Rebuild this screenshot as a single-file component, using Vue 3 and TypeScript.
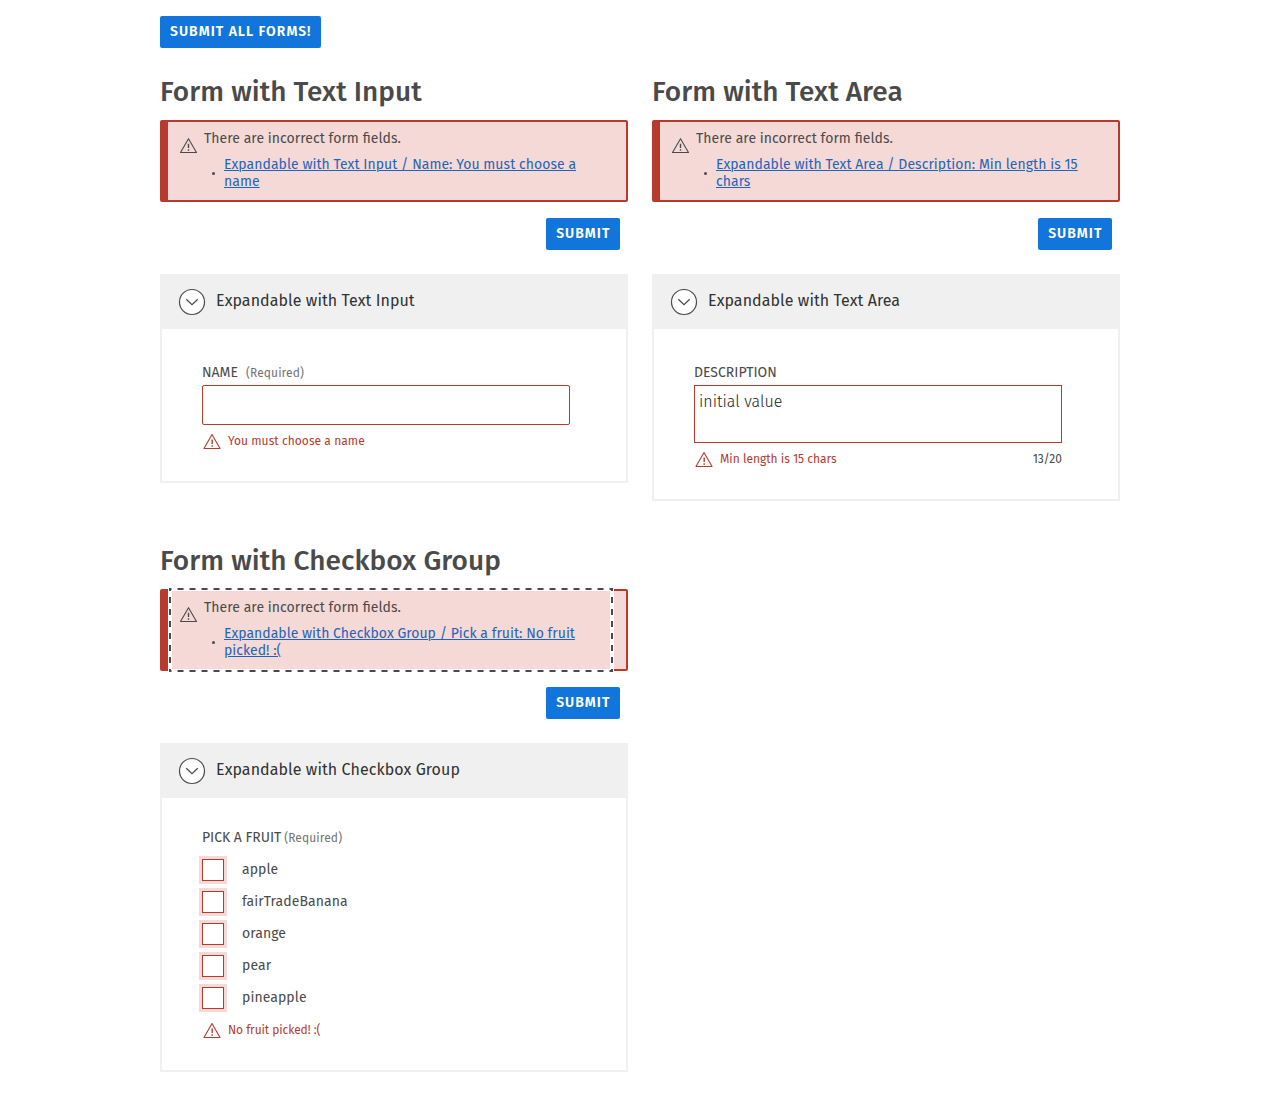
<script setup lang="ts">
import { ref } from 'vue'

interface FormItem {
  title: string
  panel: string
  error: string
  kind: 'input' | 'textarea' | 'checkbox'
  label: string
  required: boolean
  message: string
  focused: boolean
}

const forms: FormItem[] = [
  {
    title: 'Form with Text Input',
    panel: 'Expandable with Text Input',
    error: 'Expandable with Text Input / Name: You must choose a name',
    kind: 'input',
    label: 'Name',
    required: true,
    message: 'You must choose a name',
    focused: false,
  },
  {
    title: 'Form with Text Area',
    panel: 'Expandable with Text Area',
    error: 'Expandable with Text Area / Description: Min length is 15 chars',
    kind: 'textarea',
    label: 'Description',
    required: false,
    message: 'Min length is 15 chars',
    focused: false,
  },
  {
    title: 'Form with Checkbox Group',
    panel: 'Expandable with Checkbox Group',
    error: 'Expandable with Checkbox Group / Pick a fruit: No fruit picked! :(',
    kind: 'checkbox',
    label: 'Pick a fruit',
    required: true,
    message: 'No fruit picked! :(',
    focused: true,
  },
]

const fruits = ['apple', 'fairTradeBanana', 'orange', 'pear', 'pineapple']
const name = ref('')
const description = ref('initial value')
const picked = ref<string[]>([])
</script>

<template>
  <main class="page">
    <button type="button" class="btn">Submit all forms!</button>

    <div class="grid">
      <form v-for="form in forms" :key="form.title" class="form" :class="form.kind" @submit.prevent>
        <h2 class="title">{{ form.title }}</h2>

        <div class="alert">
          <div class="alert-content" :class="{ focused: form.focused }">
            <svg v-if="form.focused" class="focus-ring" viewBox="0 0 444 84" aria-hidden="true">
              <path d="M0 1H444M0 83H444" stroke-dashoffset="3.5" />
              <path d="M1 0V84M443 0V84" stroke-dashoffset="3" />
            </svg>
            <svg class="warn" viewBox="0 0 20 20" aria-hidden="true">
              <path d="M10.5 2.7 18.5 16.5H2.5Z" />
              <path class="mark" d="M10.5 7.7v4.2M10.5 13.3v1.5" />
            </svg>
            <div class="alert-text">
              <p>There are incorrect form fields.</p>
              <ul>
                <li><a href="#">{{ form.error }}</a></li>
              </ul>
            </div>
          </div>
        </div>

        <div class="actions"><button type="submit" class="btn">Submit</button></div>

        <section class="panel">
          <header class="panel-head">
            <svg class="chevron" viewBox="0 0 28 28" aria-hidden="true">
              <circle cx="14" cy="14" r="12.5" />
              <path d="m8.3 11.3 5.7 5.4 5.7-5.4" />
            </svg>
            <span>{{ form.panel }}</span>
          </header>

          <div class="panel-body">
            <div class="label">
              <span class="label-text">{{ form.label }}</span>
              <span v-if="form.required" class="required">(Required)</span>
            </div>

            <input v-if="form.kind === 'input'" v-model="name" class="text-input" />
            <textarea v-else-if="form.kind === 'textarea'" v-model="description" class="text-area"></textarea>
            <div v-else class="options">
              <label v-for="fruit in fruits" :key="fruit" class="option">
                <input v-model="picked" type="checkbox" :value="fruit" />
                <span>{{ fruit }}</span>
              </label>
            </div>

            <div class="message">
              <svg class="warn" viewBox="0 0 20 20" aria-hidden="true">
                <path d="M10 2.5 18 16.5H2Z" />
                <path class="mark" d="M10.2 7.5v4.4M10.2 13.2v1.5" />
              </svg>
              <span>{{ form.message }}</span>
              <span v-if="form.kind === 'textarea'" class="count">{{ description.length }}/20</span>
            </div>
          </div>
        </section>
      </form>
    </div>
  </main>
</template>

<style>
body {
  margin: 0;
  background: #fff;
}
</style>

<style scoped>
.page,
.page * {
  box-sizing: border-box;
}
.page {
  width: 960px;
  margin: 0 auto;
  padding-top: 16px;
  color: #4a4a4a;
  font: 400 14px/17px "Fira Sans", "Noto Sans", sans-serif;
  font-feature-settings: "liga" 1;
}
.btn {
  display: block;
  height: 32px;
  padding: 0 9.6px 2px 10px;
  border: 0;
  border-radius: 2px;
  background: #1175dc;
  color: #fff;
  font: 600 14px/17px "Fira Sans", "Noto Sans", sans-serif;
  letter-spacing: 1px;
  text-transform: uppercase;
}
.grid {
  display: grid;
  grid-template-columns: 468px 468px;
  column-gap: 24px;
  row-gap: 40px;
  align-items: start;
  margin-top: 24px;
}
.title {
  height: 48px;
  margin: 0;
  font-size: 28px;
  font-weight: 500;
  line-height: 40px;
  letter-spacing: 0.05px;
}
.alert {
  height: 82px;
  border: 2px solid #b83a2c;
  border-left-width: 8px;
  border-radius: 2px;
  background: #f5d9d6;
}
.alert-content {
  display: flex;
  width: 442px;
  height: 78px;
  margin-left: 2px;
  padding: 8px 0 0 8px;
}
.focused {
  position: relative;
  width: 438px;
  margin-left: 4px;
  padding-left: 6px;
  box-shadow: 0 0 0 4px #fff;
}
.focus-ring {
  position: absolute;
  top: -3px;
  left: -3px;
  width: 444px;
  height: 84px;
  fill: none;
  stroke: #4a4a4a;
  stroke-width: 2;
  stroke-dasharray: 6 6;
}
.warn {
  flex: none;
  width: 20px;
  height: 20px;
  fill: none;
  stroke: currentColor;
  stroke-width: 1.1;
  stroke-linejoin: round;
}
.warn .mark {
  stroke-width: 1.4;
}
.alert .warn {
  margin: 6px 6px 0 0;
}
.alert p {
  margin: 0;
  letter-spacing: 0.05px;
}
.alert ul {
  margin: 9px 0 0;
  padding: 0;
  list-style: none;
}
.alert li {
  position: relative;
  width: 388px;
  padding-left: 20px;
  letter-spacing: 0.04px;
}
.checkbox .alert li {
  letter-spacing: 0.01px;
}
.alert li::before {
  content: "";
  position: absolute;
  top: 16px;
  left: 8px;
  width: 3px;
  height: 3px;
  border-radius: 50%;
  background: #4a4a4a;
}
.alert a {
  color: #1f64b8;
  text-decoration: underline;
  text-underline-offset: 1px;
  text-decoration-thickness: 1px;
}
.actions {
  display: flex;
  justify-content: flex-end;
  padding: 16px 8px 24px;
}
.panel {
  border: 2px solid #f0f0f0;
}
.panel-head {
  display: flex;
  align-items: center;
  gap: 10px;
  height: 53px;
  padding: 0 0 2px 16px;
  background: #f0f0f0;
  color: #323232;
  font-size: 16px;
  letter-spacing: 0.07px;
}
.panel-head span {
  padding-bottom: 3px;
}
.chevron {
  width: 28px;
  height: 28px;
  fill: none;
  stroke: #4a4a4a;
  stroke-width: 1.2;
}
.chevron circle {
  fill: #fff;
}
.panel-body {
  padding: 35px 56px 29px 40px;
}
.label {
  display: flex;
  align-items: baseline;
  gap: 8px;
  height: 21px;
}
.label-text {
  text-transform: uppercase;
}
.required {
  color: #737373;
  font-size: 12px;
  letter-spacing: 0.1px;
}
.text-input,
.text-area {
  display: block;
  width: 368px;
  border: 1px solid #b83a2c;
  outline: 0;
  background: #fff;
  color: #222;
  font: 300 16px/20px "Fira Sans", "Noto Sans", sans-serif;
}
.text-input {
  height: 40px;
  padding: 0 4px;
  border-radius: 2px;
}
.text-area {
  height: 58px;
  padding: 6px 4px;
  border-radius: 0;
  resize: none;
}
.message {
  display: flex;
  align-items: center;
  gap: 6px;
  height: 20px;
  margin-top: 7px;
  color: #b83a2c;
  font-size: 12px;
}
.message span {
  padding-bottom: 2px;
}
.input .message {
  letter-spacing: 0.05px;
}
.message .count {
  margin-left: auto;
  color: #4a4a4a;
}
.checkbox .label {
  gap: 3px;
}
.checkbox .label-text {
  letter-spacing: -0.04px;
}
.checkbox .panel-body {
  padding-top: 31px;
}
.options {
  display: flex;
  flex-direction: column;
  gap: 10px;
  padding-top: 9px;
}
.option {
  display: flex;
  align-items: center;
  gap: 18px;
  height: 22px;
}
.option span {
  padding-bottom: 2px;
  letter-spacing: 0.08px;
}
.option input {
  appearance: none;
  width: 22px;
  height: 22px;
  margin: 0;
  border: 1px solid #b83a2c;
  background: #fff;
  box-shadow: 0 0 0 3px #f5d9d6;
}
.checkbox .message {
  margin-top: 12px;
  letter-spacing: -0.08px;
}
</style>
